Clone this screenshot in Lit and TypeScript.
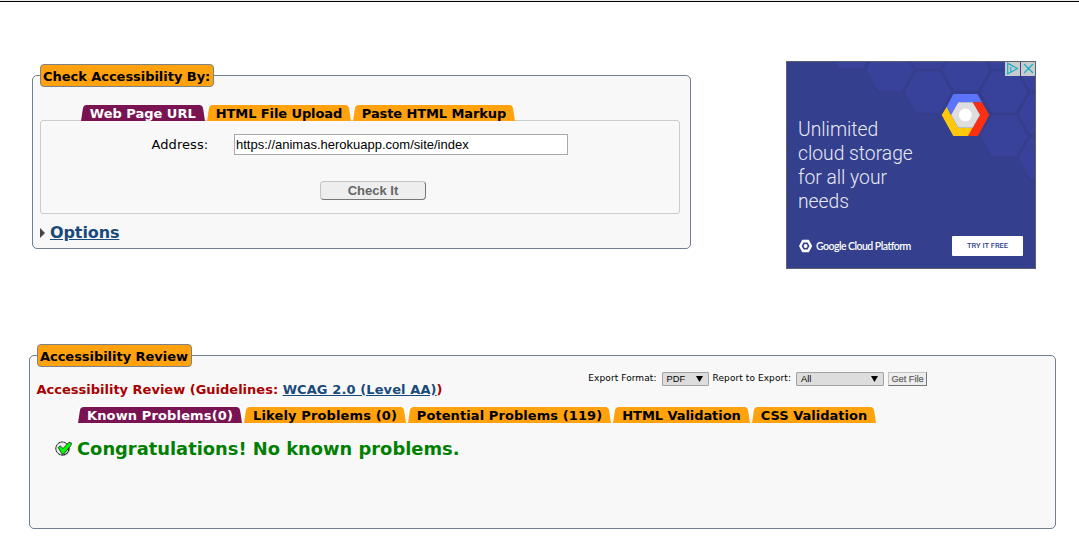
import { LitElement, html, css, svg } from "lit";
import { customElement, property } from "lit/decorators.js";
import { classMap } from "lit/directives/class-map.js";

interface Tab { text: string; width: number; tracking: number; }

@customElement("tab-strip")
class TabStrip extends LitElement {
  @property({ attribute: false }) tabs: Tab[] = [];

  static styles = css`
    :host { display: flex; gap: 2px; height: 16px; }
    .tab {
      display: flex; height: 16px; color: #000; background: #fff;
      font: bold 13px/17px "DejaVu Sans", sans-serif; white-space: nowrap;
      fill: #ffa20e;
    }
    .label { flex: 1; display: flex; justify-content: center; background: #ffa20e; height: 16px; margin: 0 -0.5px; }
    .active { color: #fff; fill: #7a1352; }
    .active .label { background: #7a1352; }
    svg { display: block; flex: none; width: 6px; height: 16px; }
  `;

  render() {
    return this.tabs.map((t, i) => html`
      <div class=${classMap({ tab: true, active: i === 0 })} style="width:${t.width}px;letter-spacing:${t.tracking}px">
        <svg viewBox="0 0 6 16"><path d="M6.2 0C3.2 0 2.2 1.2 1.8 4L0 16H6.2Z"/></svg>
        <span class="label">${t.text}</span>
        <svg viewBox="0 0 6 16"><path d="M-.2 0C2.8 0 3.8 1.2 4.2 4L6 16H-.2Z"/></svg>
      </div>`);
  }
}

const HEXES = [[65, -13], [104, 9], [142, -13], [142, 31], [180, 9], [218, -13], [218, 31], [218, 75], [256, 9], [256, 53], [256, 97]];

@customElement("cloud-ad")
class CloudAd extends LitElement {
  static styles = css`
    :host {
      display: block; position: relative; box-sizing: border-box; width: 250px; height: 208px;
      background: #343f8d; border: 1px solid #5d616f; overflow: hidden; color: #e8eaf6;
    }
    .art { position: absolute; left: -1px; top: -1px; }
    .body { position: relative; padding: 56px 12px 0 11px; }
    .copy { font: 300 19.3px/24px Roboto, sans-serif; height: 96px; white-space: nowrap; }
    .foot { display: flex; align-items: center; justify-content: space-between; margin-top: 22px; height: 20px; }
    .brand { display: flex; align-items: center; gap: 3px; font: 600 10.5px/14px Lato, sans-serif; letter-spacing: -0.53px; color: #fff; white-space: nowrap; }
    .cta { width: 71px; height: 20px; background: #fff; border-radius: 1px; color: #343f8d; font: 500 7.5px/20px Roboto, sans-serif; text-align: center; }
    .corner { position: absolute; right: -1px; top: -1px; display: block; }
  `;

  render() {
    return html`
      <svg class="art" width="250" height="208">
        ${HEXES.map(([x, y]) => svg`<path fill="#38429a" stroke="#343e8d" stroke-width="1.8" stroke-linejoin="round"
          d="M${x - 24.5} ${y}L${x - 12.5} ${y - 21.5}H${x + 12.5}L${x + 24.5} ${y}L${x + 12.5} ${y + 21.5}H${x - 12.5}Z"/>`)}
        <path fill="#ffc80a" d="M155.7 54L160.7 45.7L165 54L172.3 66.7H187L182.3 75H167.3Z"/>
        <path fill="#5a74fb" d="M160.7 45.7L167.3 33H191.3L196 41.3H172.3L165 54Z"/>
        <path fill="#fb2f12" d="M186.7 41.3H196L203.3 54L192 75H182L194 54Z"/>
        <path fill="#dedede" d="M165 54L172.3 41.3H186.7L194 54L186.7 66.7H172.3Z"/>
        <circle cx="179.3" cy="54" r="6.4" fill="#fff"/>
      </svg>
      <div class="body">
        <div class="copy">Unlimited<br>cloud storage<br>for all your<br>needs</div>
        <div class="foot">
          <div class="brand">
            <svg width="15" height="14" viewBox="0 0 15 14">
              <path fill="#fff" fill-rule="evenodd" d="M4.3 .8H10.8L14.2 7L10.8 13.2H4.3L1 7ZM5.6 3.4L3.6 7L5.6 10.6H9.5L11.5 7L9.5 3.4Z"/>
              <circle cx="7.6" cy="7" r="1.9" fill="#fff"/>
            </svg>
            <span>Google Cloud Platform</span>
          </div>
          <div class="cta">TRY IT FREE</div>
        </div>
      </div>
      <svg class="corner" width="31" height="15" viewBox="0 0 31 15">
        <path fill="#c9cccb" d="M0 0H15V15H0ZM16 0H31V15H16Z"/>
        <path fill="none" stroke="#12aecb" stroke-width="1.2" d="M5.2 3.6L12.4 7.5L5.8 11.2V6M5.2 3.6L2.7 2.3V12.8L5.8 11.2M19 3L28 12M28 3L19 12"/>
      </svg>`;
  }
}

const CHECK_TABS: Tab[] = [
  { text: "Web Page URL", width: 124.5, tracking: 0 },
  { text: "HTML File Upload", width: 144, tracking: -0.1 },
  { text: "Paste HTML Markup", width: 162, tracking: -0.1 },
];

const REVIEW_TABS: Tab[] = [
  { text: "Known Problems(0)", width: 164, tracking: 0.13 },
  { text: "Likely Problems (0)", width: 162, tracking: 0.13 },
  { text: "Potential Problems (119)", width: 203, tracking: 0.08 },
  { text: "HTML Validation", width: 137, tracking: -0.07 },
  { text: "CSS Validation", width: 124, tracking: 0 },
];

@customElement("app-root")
class AppRoot extends LitElement {
  static styles = css`
    :host {
      display: block; box-sizing: border-box; width: 1079px; height: 552px; overflow: hidden;
      background: #fff; border-top: 1px solid #eee; font-family: "DejaVu Sans", sans-serif; color: #000;
    }
    .rule { height: 1px; background: #000; }
    .top { display: flex; justify-content: space-between; padding: 59px 43px 0 32px; }
    .panel {
      box-sizing: border-box; height: 174px; border: 1px solid #708090; border-radius: 5px;
      background: #f8f8f8; padding: 0 7px;
    }
    .check { width: 659px; margin-top: 14px; }
    .review { width: 1027px; margin: 86px 0 0 29px; }
    .legend {
      box-sizing: border-box; width: 174px; height: 23px; margin-top: -12px; padding: 0 2px;
      border: 1px solid #7d8287; border-radius: 4px; background: #ffa20e;
      font: bold 13px/23px "DejaVu Sans", sans-serif; letter-spacing: -0.04px; white-space: nowrap;
    }
    .review .legend { width: 155px; }
    .check-tabs { margin: 18px 0 0 40.5px; position: relative; }
    .card {
      box-sizing: border-box; width: 640px; height: 94px; margin-top: -1px; padding-top: 13px;
      border: 1px solid #ccc; border-radius: 3px;
    }
    .field { display: flex; align-items: center; padding-left: 110.5px; }
    .field label { width: 82.5px; font-size: 13px; line-height: 20px; letter-spacing: 0.07px; }
    .address {
      box-sizing: border-box; width: 334px; height: 21px; border: 1px solid #a9a9a9; background: #fff;
      font: 13px/19px "Liberation Sans", sans-serif; padding: 0 1px;
    }
    .btn {
      box-sizing: border-box; border: 1px solid; border-color: #c4c4c4 #757575 #757575 #c4c4c4;
      background: #eee; color: #666; text-align: center; font-family: "Liberation Sans", sans-serif; white-space: nowrap;
    }
    .submit { width: 106px; height: 19px; margin: 26px 0 0 279px; border-radius: 4px; font-size: 13px; font-weight: bold; line-height: 18px; }
    .options { display: flex; align-items: center; gap: 5px; margin-top: 8px; height: 21px; }
    .options a { font-size: 16px; font-weight: bold; line-height: 21px; letter-spacing: -0.1px; }
    a { color: #1a4a7a; text-decoration: underline; }
    .head { display: flex; justify-content: space-between; align-items: flex-start; height: 35px; margin-top: 5px; padding-right: 121px; }
    h2 { margin: 10px 0 0 -0.5px; font-size: 13px; line-height: 16px; letter-spacing: 0; color: #a00; white-space: nowrap; }
    h2 a { letter-spacing: 0.1px; }
    .export { display: flex; align-items: center; height: 14px; font-size: 9px; white-space: nowrap; }
    .export > span { line-height: 12px; margin-top: -2px; letter-spacing: 0.08px; }
    .select {
      box-sizing: border-box; display: flex; align-items: center; justify-content: space-between; height: 14px;
      padding: 0 5px 0 4px; border: 1px solid #a3a3a3; border-radius: 1px; background: #ddd;
      font: 9.3px/12px "Liberation Sans", sans-serif; margin: 0 4px 0 5px;
    }
    .format { width: 47px; }
    .report { width: 88px; }
    .get { width: 39px; height: 14px; font-size: 9.2px; line-height: 13px; -webkit-text-stroke: 0.25px #666; }
    .review-tabs { margin-left: 41px; }
    .result { display: flex; align-items: center; gap: 5px; margin: 14px 0 0 18px; height: 24px; color: #008000; font-size: 17.87px; font-weight: bold; line-height: 24px; white-space: nowrap; }
    svg { display: block; flex: none; }
  `;

  render() {
    const caret = html`<svg width="7" height="6" viewBox="0 0 7 6"><path d="M0 0H7L3.5 6Z"/></svg>`;
    return html`
      <div class="rule"></div>
      <div class="top">
        <section class="panel check">
          <div class="legend">Check Accessibility By:</div>
          <tab-strip class="check-tabs" .tabs=${CHECK_TABS}></tab-strip>
          <div class="card">
            <div class="field"><label>Address:</label><div class="address">https://animas.herokuapp.com/site/index</div></div>
            <div class="btn submit">Check It</div>
          </div>
          <div class="options">
            <svg width="5" height="10" viewBox="0 0 5 10"><path fill="#444" d="M0 0L5 5L0 10Z"/></svg>
            <a>Options</a>
          </div>
        </section>
        <cloud-ad></cloud-ad>
      </div>
      <section class="panel review">
        <div class="legend">Accessibility Review</div>
        <div class="head">
          <h2>Accessibility Review (Guidelines: <a>WCAG 2.0 (Level AA)</a>)</h2>
          <div class="export">
            <span>Export Format:</span>
            <div class="select format"><span>PDF</span>${caret}</div>
            <span>Report to Export:</span>
            <div class="select report"><span>All</span>${caret}</div>
            <div class="btn get">Get File</div>
          </div>
        </div>
        <tab-strip class="review-tabs" .tabs=${REVIEW_TABS}></tab-strip>
        <div class="result">
          <svg width="17" height="16" viewBox="0 0 17 16">
            <path fill="#999" d="M13 4L15.5 8L13 13L9 15L5 14Z"/>
            <circle cx="7.3" cy="7.5" r="6.5" fill="#e9e9e9" stroke="#000" stroke-width="1" stroke-dasharray="2.6 .5"/>
            <path fill="#0f0" stroke="#000" stroke-width=".7" d="M3.2 6.6L5.4 4.9L8 7.6L14 1.2L16.5 2.2L15.8 4.6L8.5 13.2L6.9 12.7Z"/>
          </svg>
          <span>Congratulations! No known problems.</span>
        </div>
      </section>`;
  }
}
